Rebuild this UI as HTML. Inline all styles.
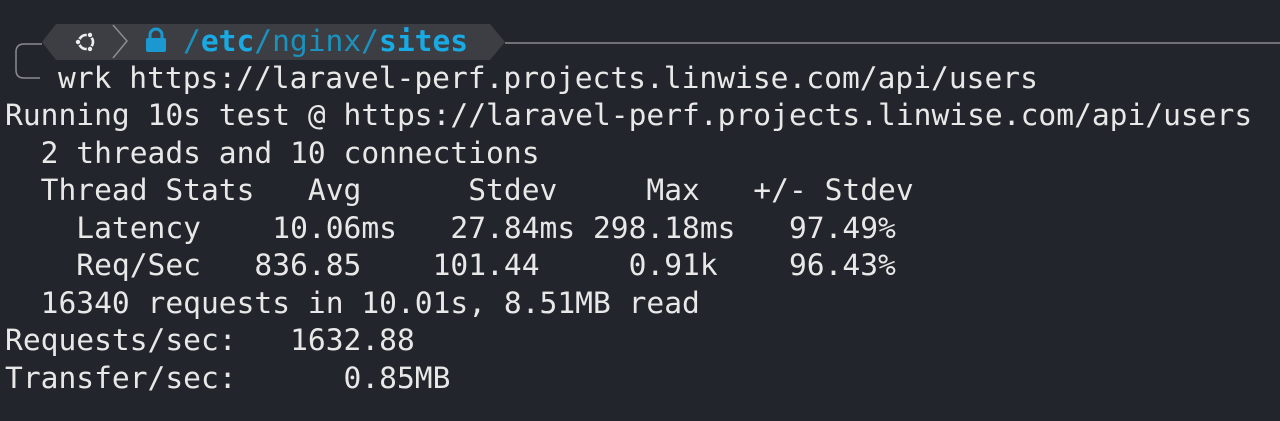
<!DOCTYPE html>
<html><head><meta charset="utf-8"><style>
html,body{margin:0;padding:0;background:#22252b;width:1280px;height:421px;overflow:hidden}
.t{position:absolute;left:5px;font-family:"DejaVu Sans Mono","Liberation Mono",monospace;font-size:29.6px;color:#e8e8e8;white-space:pre;line-height:37.5px}
.b{color:#19a9e3;font-weight:bold}
.n{color:#1b92bd}
</style></head><body>
<svg width="1280" height="100" style="position:absolute;left:0;top:0">
<path d="M505 43 H1280" stroke="#8a8c90" stroke-width="1.5"/>
<path d="M42 44 H24 Q16 44 16 52 V70 Q16 78 24 78 H40" fill="none" stroke="#8a8c90" stroke-width="1.5"/>
<polygon points="42,42 56,24 490,24 505,42 490,60 56,60" fill="#3c3e43"/>
<circle cx="86" cy="42" r="7" fill="none" stroke="#eee" stroke-width="2.6"/>
<circle cx="78" cy="42" r="2.8" fill="#eee" stroke="#3c3e43" stroke-width="1.2"/>
<circle cx="90" cy="35" r="2.8" fill="#eee" stroke="#3c3e43" stroke-width="1.2"/>
<circle cx="90" cy="49" r="2.8" fill="#eee" stroke="#3c3e43" stroke-width="1.2"/>
<path d="M113 25 L127 41 L113 58" fill="none" stroke="#8a8c90" stroke-width="1.5"/>
<path d="M150 39 V35 A6 6 0 0 1 162 35 V39" fill="none" stroke="#1a98cf" stroke-width="3"/>
<rect x="146" y="38" width="20" height="14" rx="2" fill="#1a98cf"/>
</svg>
<div class="t" style="left:183px;top:23px"><span class="n">/</span><span class="b">etc</span><span class="n">/nginx/</span><span class="b">sites</span></div>
<div class="t" style="left:58px;top:60px">wrk https://laravel-perf.projects.linwise.com/api/users</div>
<div class="t" style="top:97px">Running 10s test @ https://laravel-perf.projects.linwise.com/api/users
  2 threads and 10 connections
  Thread Stats   Avg      Stdev     Max   +/- Stdev
    Latency    10.06ms   27.84ms 298.18ms   97.49%
    Req/Sec   836.85    101.44     0.91k    96.43%
  16340 requests in 10.01s, 8.51MB read
Requests/sec:   1632.88
Transfer/sec:      0.85MB</div>
</body></html>
